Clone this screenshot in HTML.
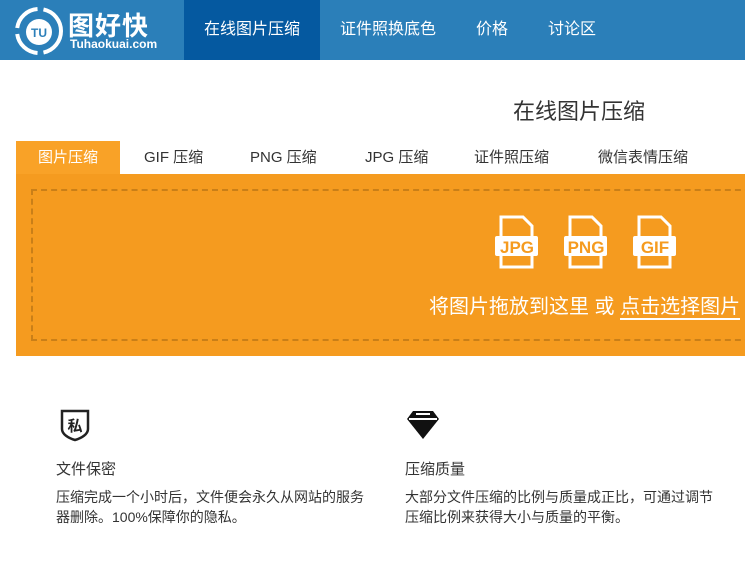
<!DOCTYPE html>
<html><head><meta charset="utf-8"><style>
*{margin:0;padding:0;box-sizing:border-box}
body{width:745px;height:587px;overflow:hidden;background:#fff;font-family:"Liberation Sans","Noto Sans CJK SC",sans-serif;position:relative}
.hd{position:absolute;left:0;top:0;width:745px;height:60px;background:#2b7fb9}
.nav{position:absolute;top:0;height:60px;line-height:60px;color:#fff;font-size:16px}
.abs{position:absolute;white-space:nowrap}
.tab{position:absolute;top:141px;height:33px;line-height:34px;font-size:15px;color:#333}
.feat{font-size:14px;color:#333;line-height:20px}
</style></head><body>
<div class="hd"></div>
<svg class="abs" style="left:14px;top:6px" width="50" height="50" viewBox="0 0 50 50">
<circle cx="25" cy="25" r="22" fill="none" stroke="#fff" stroke-width="4" stroke-dasharray="30 6"/>
<circle cx="25" cy="26" r="13" fill="#fff"/>
<text x="25" y="31" font-size="12" font-weight="bold" fill="#2b7fb9" text-anchor="middle" font-family="Liberation Sans">TU</text>
</svg>
<div class="abs" style="left:68px;top:6px;color:#fff;font-size:26px;font-weight:bold;letter-spacing:1px">图好快</div>
<div class="abs" style="left:70px;top:37px;color:#fff;font-size:12px;font-weight:bold">Tuhaokuai.com</div>
<div class="nav" style="left:184px;width:136px;background:#0559a0;text-align:center">在线图片压缩</div>
<div class="nav" style="left:340px">证件照换底色</div>
<div class="nav" style="left:476px">价格</div>
<div class="nav" style="left:548px">讨论区</div>
<div class="abs" style="left:513px;top:94px;font-size:22px;color:#333">在线图片压缩</div>
<div class="tab" style="left:16px;width:104px;background:#f9a227;color:#fff;text-align:center">图片压缩</div>
<div class="tab" style="left:144px">GIF 压缩</div>
<div class="tab" style="left:250px">PNG 压缩</div>
<div class="tab" style="left:365px">JPG 压缩</div>
<div class="tab" style="left:474px">证件照压缩</div>
<div class="tab" style="left:598px">微信表情压缩</div>
<div class="abs" style="left:16px;top:174px;width:729px;height:182px;background:#f59b1f"></div>
<div class="abs" style="left:31px;top:189px;width:730px;height:152px;border:2px dashed #c97f18"></div>
<svg class="abs" style="left:492px;top:214px" width="190" height="56" viewBox="0 0 190 56">
<g fill="none" stroke="#fff" stroke-width="3">
<path d="M9 22V3h22l9 9v10M40 42v11H9V42"/>
<path d="M78 22V3h22l9 9v10M109 42v11H78V42"/>
<path d="M147 22V3h22l9 9v10M178 42v11H147V42"/>
</g>
<g fill="#fff"><rect x="3" y="22" width="43" height="20" rx="2"/><rect x="72" y="22" width="43" height="20" rx="2"/><rect x="141" y="22" width="43" height="20" rx="2"/></g>
<g font-family="Liberation Sans" font-weight="bold" font-size="17" fill="#f59b1f" text-anchor="middle">
<text x="25" y="39">JPG</text><text x="94" y="39">PNG</text><text x="163" y="39">GIF</text></g>
</svg>
<div class="abs" style="left:429px;top:290px;font-size:20px;color:#fff">将图片拖放到这里 或 <span style="border-bottom:2px solid #fff">点击选择图片</span></div>
<svg class="abs" style="left:59px;top:408px" width="32" height="34" viewBox="0 0 32 34">
<path d="M3 3h26v18c0 5-6 9-13 11C9 30 3 26 3 21z" fill="none" stroke="#222" stroke-width="2.5"/>
<text x="16" y="23" font-size="15" font-weight="bold" text-anchor="middle" fill="#222" font-family="Noto Sans CJK SC">私</text></svg>
<svg class="abs" style="left:406px;top:410px" width="34" height="30" viewBox="0 0 34 30">
<path d="M7 1h20l6 8-16 20L1 9z" fill="#111"/>
<path d="M3 9h28M10 4h14" stroke="#fff" stroke-width="2"/></svg>
<div class="abs" style="left:56px;top:458px;font-size:15px;color:#333">文件保密</div>
<div class="abs feat" style="left:56px;top:487px">压缩完成一个小时后，文件便会永久从网站的服务<br>器删除。100%保障你的隐私。</div>
<div class="abs" style="left:405px;top:458px;font-size:15px;color:#333">压缩质量</div>
<div class="abs feat" style="left:405px;top:487px">大部分文件压缩的比例与质量成正比，可通过调节<br>压缩比例来获得大小与质量的平衡。</div>
</body></html>
